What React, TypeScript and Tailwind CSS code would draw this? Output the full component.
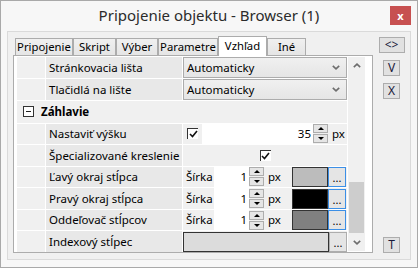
import React from 'react';

const font = { fontFamily: '"Noto Sans", "Open Sans", sans-serif' };

function Chevron({ up = false }: { up?: boolean }) {
  return (
    <svg width="8" height="5" viewBox="0 0 8 5" className="block">
      <polyline
        points={up ? '0.8,4.2 4,1.2 7.2,4.2' : '0.8,0.8 4,3.8 7.2,0.8'}
        fill="none"
        stroke="#6d6d6d"
        strokeWidth="1.6"
      />
    </svg>
  );
}

function CheckBox() {
  return (
    <div className="w-[11px] h-[11px] border-l border-t border-[#333] bg-white flex items-center justify-center">
      <svg width="9" height="8" viewBox="0 0 9 8">
        <polyline points="1,4 3.5,6.5 8,1" fill="none" stroke="#111" strokeWidth="1.6" />
      </svg>
    </div>
  );
}

function Spinner() {
  return (
    <div className="flex flex-col w-[15px] h-[19px] gap-px">
      <div className="flex-1 border border-[#adadad] bg-[#e5e5e5] flex items-center justify-center">
        <div className="w-0 h-0 border-l-[3px] border-r-[3px] border-b-[3px] border-l-transparent border-r-transparent border-b-black" />
      </div>
      <div className="flex-1 border border-[#adadad] bg-[#e5e5e5] flex items-center justify-center">
        <div className="w-0 h-0 border-l-[3px] border-r-[3px] border-t-[3px] border-l-transparent border-r-transparent border-t-black" />
      </div>
    </div>
  );
}

function Dots({ blue = false }: { blue?: boolean }) {
  return (
    <div
      className={`w-[18px] h-[20px] border flex items-end justify-center pb-[3px] text-[11px] leading-none bg-[#e5e5e5] ${
        blue ? 'border-[#3c8fe6]' : 'border-[#adadad]'
      }`}
    >
      ...
    </div>
  );
}

function Dropdown() {
  return (
    <div className="w-full h-[21px] border border-[#acacac] bg-gradient-to-b from-[#f0f0f0] to-[#e5e5e5] flex items-center justify-between pl-[3px] pr-[6px]">
      <span>Automaticky</span>
      <Chevron />
    </div>
  );
}

function Label({ text }: { text: string }) {
  return (
    <div className="w-[136px] bg-[#e8e8e8] flex items-center pl-[3px] shrink-0 whitespace-nowrap overflow-hidden">
      {text}
    </div>
  );
}

function Row({ label, h = 'h-[21px]', children }: { label: string; h?: string; children: React.ReactNode }) {
  return (
    <div className={`flex ${h} gap-px`}>
      <div className="w-[28px] bg-[#f0f0f0] shrink-0" />
      <Label text={label} />
      <div className="flex-1 flex items-center">{children}</div>
    </div>
  );
}

function WidthRow({ label, swatch, blue = true }: { label: string; swatch: string; blue?: boolean }) {
  return (
    <Row label={label}>
      <div className="flex items-center w-full h-full bg-[#f0f0f0]">
        <span className="pl-[3px] w-[31px]">Šírka</span>
        <div className="w-[35px] h-full bg-white flex items-center justify-end pr-[2px]">1</div>
        <Spinner />
        <span className="ml-[4px] w-[24px]">px</span>
        <div className="w-[36px] h-[20px] border border-[#333]" style={{ background: swatch }} />
        <Dots blue={blue} />
      </div>
    </Row>
  );
}

function SideButton({ text, w = 'w-[17px]' }: { text: string; w?: string }) {
  return (
    <div className={`${w} h-[16px] border border-[#adadad] bg-[#e1e1e1] flex items-center justify-center text-[12px] leading-none text-[#1a1a3a]`}>
      {text}
    </div>
  );
}

const tabs = [
  { t: 'Pripojenie', w: 'w-[58px]' },
  { t: 'Skript', w: 'w-[43px]' },
  { t: 'Výber', w: 'w-[42px]' },
  { t: 'Parametre', w: 'w-[60px]' },
  { t: 'Vzhľad', w: 'w-[49px]', active: true },
  { t: 'Iné', w: 'w-[39px]' },
];

export default function App() {
  return (
    <div className="w-[418px] h-[268px] border border-[#a9a9a9] bg-[#f7f7f7] flex flex-col text-[#000] overflow-hidden" style={font}>
      {/* Title bar */}
      <div className="relative h-[30px] flex items-center justify-center shrink-0">
        <span className="text-[15px] text-[#2b2b2b] leading-none pb-[1px]">Pripojenie objektu - Browser (1)</span>
        <div className="absolute right-[6px] top-[5px] w-[21px] h-[19px] bg-[#c75050] flex items-center justify-center text-white text-[11px] font-bold leading-none">
          x
        </div>
      </div>

      {/* Client area */}
      <div className="mx-[6px] h-[229px] border border-[#dadada] bg-[#f0f0f0] flex text-[11.5px] leading-none">
        {/* Tab control */}
        <div className="ml-[5px] mt-[4px] w-[360px] flex flex-col">
          <div className="flex items-end pl-[2px] h-[19px] text-[11.3px]">
            {tabs.map((tab) =>
              tab.active ? (
                <div
                  key={tab.t}
                  className={`${tab.w} h-[20px] -mb-px relative z-10 bg-white border border-b-0 border-[#acacac] flex items-center justify-center pb-[2px] whitespace-nowrap`}
                >
                  {tab.t}
                </div>
              ) : (
                <div
                  key={tab.t}
                  className={`${tab.w} h-[17px] bg-gradient-to-b from-[#f0f0f0] to-[#e5e5e5] border border-b-0 border-[#acacac] flex items-center justify-center whitespace-nowrap`}
                >
                  {tab.t}
                </div>
              )
            )}
          </div>
          <div className="h-[198px] border border-[#acacac] bg-white flex pl-[3px] pt-px pr-[7px]">
            {/* Property grid */}
            <div className="w-[330px] flex flex-col gap-px">
              <Row label="Stránkovacia lišta">
                <Dropdown />
              </Row>
              <Row label="Tlačidlá na lište">
                <Dropdown />
              </Row>
              <div className="h-[22px] bg-[#f0f0f0] flex items-center">
                <div className="ml-[6px] w-[11px] h-[11px] border border-[#333] bg-white flex items-center justify-center">
                  <div className="w-[5px] h-px bg-[#222]" />
                </div>
                <span className="ml-[7px] font-bold">Záhlavie</span>
              </div>
              <Row label="Nastaviť výšku">
                <div className="flex items-center w-full h-full bg-[#f0f0f0]">
                  <div className="w-[19px] flex justify-center">
                    <CheckBox />
                  </div>
                  <div className="w-[111px] h-full bg-white flex items-center justify-end pr-[2px]">35</div>
                  <Spinner />
                  <span className="ml-[4px]">px</span>
                </div>
              </Row>
              <Row label="Špecializované kreslenie">
                <div className="w-full h-full bg-[#f0f0f0] flex items-center justify-center">
                  <CheckBox />
                </div>
              </Row>
              <WidthRow label="Ľavý okraj stĺpca" swatch="#bcbcbc" />
              <WidthRow label="Pravý okraj stĺpca" swatch="#000000" />
              <WidthRow label="Oddeľovač stĺpcov" swatch="#808080" />
              <Row label="Indexový stĺpec">
                <div className="flex items-center w-full h-full bg-[#f0f0f0]">
                  <div className="flex-1 h-[20px] border border-[#333] bg-[#dcdcdc]" />
                  <Dots />
                </div>
              </Row>
            </div>
            {/* Scrollbar */}
            <div className="w-[17px] ml-px h-[194px] bg-[#f0f0f0] flex flex-col">
              <div className="h-[17px] flex items-center justify-center">
                <Chevron up />
              </div>
              <div className="flex-1 px-[1px]">
                <div className="mt-[108px] h-[51px] bg-[#cdcdcd]" />
              </div>
              <div className="h-[17px] flex items-center justify-center">
                <Chevron />
              </div>
            </div>
          </div>
        </div>

        {/* Side buttons */}
        <div className="flex-1 flex flex-col items-center pt-[5px] pb-[6px]">
          <SideButton text="<>" w="w-[26px]" />
          <div className="mt-[7px]">
            <SideButton text="V" />
          </div>
          <div className="mt-[7px]">
            <SideButton text="X" />
          </div>
          <div className="mt-auto">
            <SideButton text="T" />
          </div>
        </div>
      </div>
    </div>
  );
}
